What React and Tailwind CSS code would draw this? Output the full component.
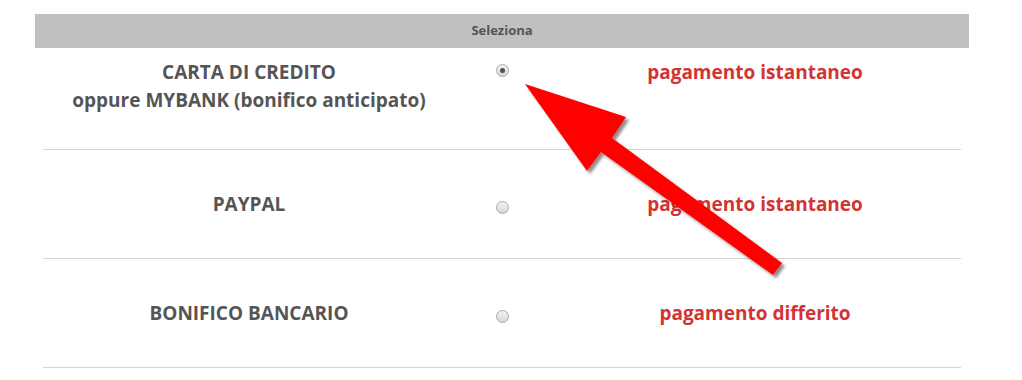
import React from "react";

const rows = [
  { label: ["CARTA DI CREDITO", "oppure MYBANK (bonifico anticipato)"], note: "pagamento istantaneo", checked: true, top: true },
  { label: ["PAYPAL"], note: "pagamento istantaneo" },
  { label: ["BONIFICO BANCARIO"], note: "pagamento differito" },
];

const Radio = ({ checked }) => (
  <span className="flex h-[13px] w-[13px] items-center justify-center rounded-full border border-[#a9a9a9] bg-gradient-to-b from-[#f4f4f4] to-[#d6d6d6]">
    {checked && <span className="h-[5px] w-[5px] rounded-full bg-[#505050]" />}
  </span>
);

const App = () => {
  return (
    <div className="relative h-[380px] w-full overflow-hidden bg-white pt-[14px] font-['Open_Sans','Liberation_Sans',sans-serif]">
      <div className="ml-[35px] w-[934px]">
        {/* header */}
        <div className="flex h-[34px] items-center justify-center bg-[#c0c0c0] text-[13px] font-bold text-[#555]">
          Seleziona
        </div>

        <div className="mx-[8px]">
          {rows.map((r, i) => (
            <div
              key={i}
              className={`grid grid-cols-[412px_94px_412px] border-b border-[#d4d4d4] ${
                r.top ? "h-[102px] items-start pt-[10px]" : "h-[109px] items-center"
              }`}
            >
              <div className="text-center text-[19px] font-bold leading-[28px] text-[#555]">
                {r.label.map((l) => (
                  <div key={l}>{l}</div>
                ))}
              </div>
              <div className={`flex justify-center ${r.top ? "pt-[6px]" : "pt-[7px]"}`}>
                <Radio checked={r.checked} />
              </div>
              <div className="text-center text-[19px] font-bold leading-[28px] text-[#d33333]">{r.note}</div>
            </div>
          ))}
        </div>
      </div>

      {/* red arrow annotation */}
      <svg className="pointer-events-none absolute left-0 top-0" width="1022" height="380">
        <defs>
          <filter id="sh" x="-10%" y="-10%" width="130%" height="130%">
            <feDropShadow dx="3" dy="3" stdDeviation="1.5" floodColor="#000" floodOpacity="0.45" />
          </filter>
        </defs>
        <polygon
          points="525,84 626,117 612,138 782,263 773,275 601,152 587,171"
          fill="#ff0000"
          filter="url(#sh)"
        />
      </svg>
    </div>
  );
};

export default App;
